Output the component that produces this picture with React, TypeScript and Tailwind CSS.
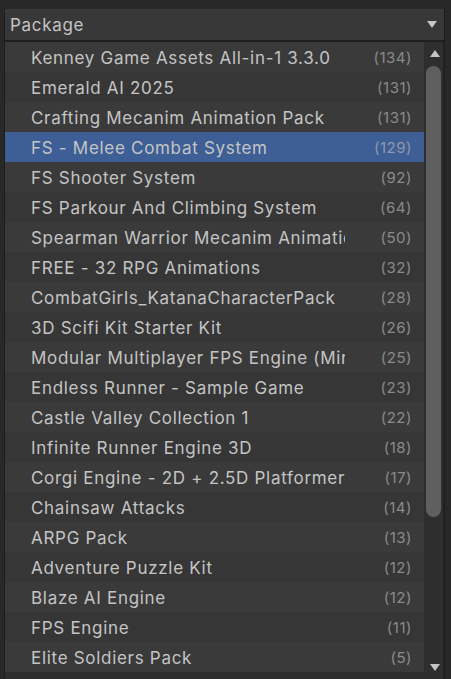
const packages: [string, number][] = [
  ["Kenney Game Assets All-in-1 3.3.0", 134],
  ["Emerald AI 2025", 131],
  ["Crafting Mecanim Animation Pack", 131],
  ["FS - Melee Combat System", 129],
  ["FS Shooter System", 92],
  ["FS Parkour And Climbing System", 64],
  ["Spearman Warrior Mecanim Animation Pack", 50],
  ["FREE - 32 RPG Animations", 32],
  ["CombatGirls_KatanaCharacterPack", 28],
  ["3D Scifi Kit Starter Kit", 26],
  ["Modular Multiplayer FPS Engine (Mirror)", 25],
  ["Endless Runner - Sample Game", 23],
  ["Castle Valley Collection 1", 22],
  ["Infinite Runner Engine 3D", 18],
  ["Corgi Engine - 2D + 2.5D Platformer", 17],
  ["Chainsaw Attacks", 14],
  ["ARPG Pack", 13],
  ["Adventure Puzzle Kit", 12],
  ["Blaze AI Engine", 12],
  ["FPS Engine", 11],
  ["Elite Soldiers Pack", 5],
];

const SELECTED = 3;

function Arrow({ up = false }: { up?: boolean }) {
  return (
    <svg width="10" height="7" viewBox="0 0 10 7" className="block">
      <path d={up ? "M0 7 L5 0 L10 7 Z" : "M0 0 L10 0 L5 7 Z"} fill="#c4c4c4" />
    </svg>
  );
}

export default function App() {
  return (
    <div
      className="w-[451px] h-[679px] overflow-hidden bg-[#282828] pt-[9px]"
      style={{ fontFamily: "Inter, 'Noto Sans', sans-serif" }}
    >
      <div className="ml-[4px] w-[441px] h-[670px] border-l border-r border-[#1d1d1d] flex flex-col">
        {/* header */}
        <div className="h-[33px] shrink-0 bg-[#383838] flex items-center pl-[5px] pr-[7px] border-b-2 border-[#1f1f1f]">
          <span className="text-[17px] tracking-[0.7px] text-[#c4c4c4] flex-1 pt-[3px]">Package</span>
          <Arrow />
        </div>
        {/* list + scrollbar */}
        <div className="flex flex-1 min-h-0">
          <div className="w-[419px] shrink-0 flex flex-col">
            {packages.map(([name, count], i) => {
              const sel = i === SELECTED;
              const bg = sel ? "bg-[#3e5f96]" : i % 2 === 0 ? "bg-[#3a3a3a]" : "bg-[#363636]";
              return (
                <div key={name} className={`h-[30px] shrink-0 flex items-center pl-[26px] pr-[12px] pt-[3px] ${bg}`}>
                  <span className="w-[314px] overflow-hidden whitespace-nowrap text-[17px] tracking-[0.7px] text-[#c4c4c4]">
                    {name}
                  </span>
                  <span className={`flex-1 text-right text-[15px] tracking-[0.5px] ${sel ? "text-[#8e98ab]" : "text-[#8a8a8a]"}`}>
                    ({count})
                  </span>
                </div>
              );
            })}
            <div className="flex-1 bg-[#2d2d2d]" />
          </div>
          <div className="flex-1 bg-[#2e2e2e] border-r border-[#232323] flex flex-col items-center">
            <div className="mt-[8px] ml-[2px]">
              <Arrow up />
            </div>
            <div className="mt-[9px] w-[15px] h-[451px] rounded-full bg-[#5f5f5f]" />
            <div className="mt-auto mb-[8px] ml-[2px]">
              <Arrow />
            </div>
          </div>
        </div>
      </div>
    </div>
  );
}
